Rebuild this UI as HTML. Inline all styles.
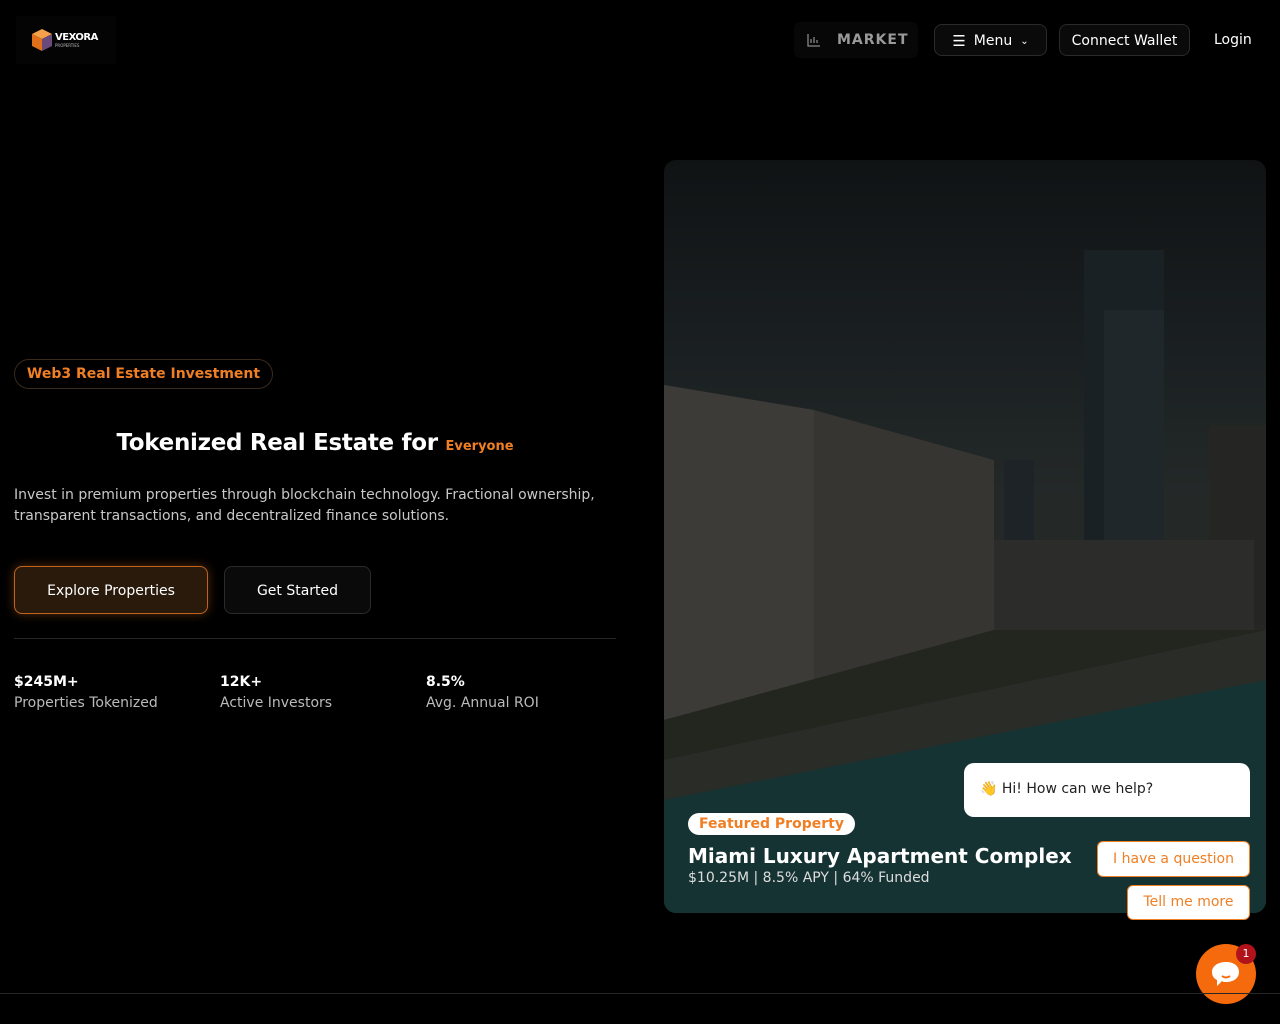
<!DOCTYPE html>
<html><head><meta charset="utf-8"><style>
*{margin:0;padding:0;box-sizing:border-box}
body{width:1280px;height:1024px;background:#000;font-family:"DejaVu Sans",sans-serif;color:#fff;position:relative;overflow:hidden}
.abs{position:absolute}
.btn{position:absolute;border:1px solid #2a2a2a;border-radius:8px;background:#0a0a0a;font-size:14px;display:flex;align-items:center;justify-content:center}
</style></head><body>
<div class="abs" style="left:16px;top:16px;width:100px;height:48px;background:#040404"></div>
<svg class="abs" style="left:32px;top:29px" width="20" height="22" viewBox="0 0 20 22"><polygon points="10,0 20,5 10,10 0,5" fill="#f5a04a"/><polygon points="0,5 10,10 10,22 0,17" fill="#e0701a"/><polygon points="20,5 10,10 10,22 20,17" fill="#6a4a7a"/></svg>
<div class="abs" style="left:55px;top:32px;font-size:10px;font-weight:bold;letter-spacing:-0.5px">VEXORA</div>
<div class="abs" style="left:55px;top:43px;font-size:4px;color:#bbb">PROPERTIES</div>
<div class="abs" style="left:794px;top:22px;width:124px;height:36px;background:#070707;border-radius:6px"></div>
<svg class="abs" style="left:807px;top:33px" width="14" height="14" viewBox="0 0 14 14" stroke="#888" fill="none" stroke-width="1.3"><path d="M1 1v12h12M4 10V6M7 10V4M10 10V7"/></svg>
<div class="abs" style="left:837px;top:32px;font-size:14px;font-weight:bold;color:#9a9a9a;letter-spacing:1px">MARKET</div>
<div class="btn" style="left:934px;top:24px;width:113px;height:32px;gap:8px;padding-top:2px"><span style="font-size:15px">☰</span>Menu<span style="font-size:10px">⌄</span></div>
<div class="btn" style="left:1059px;top:24px;width:131px;height:32px;padding-top:2px">Connect Wallet</div>
<div class="abs" style="left:1214px;top:32px;font-size:14px">Login</div>

<div class="abs" style="left:14px;top:359px;width:259px;height:30px;border:1px solid #3a2a1c;border-radius:15px;color:#f07f24;font-weight:bold;font-size:14px;line-height:29px;text-align:center">Web3 Real Estate Investment</div>
<div class="abs" style="left:0;top:430px;width:630px;text-align:center;font-size:23px;font-weight:bold;letter-spacing:-0.3px">Tokenized Real Estate for <span style="font-size:13px;color:#f07f24;letter-spacing:0">Everyone</span></div>
<div class="abs" style="left:14px;top:485px;width:610px;font-size:14px;line-height:21px;color:#c8c8c8">Invest in premium properties through blockchain technology. Fractional ownership, transparent transactions, and decentralized finance solutions.</div>
<div class="btn" style="left:14px;top:566px;width:194px;height:48px;background:#2a1a0c;border-color:#c0631c;box-shadow:0 0 10px rgba(240,127,36,.35);padding-top:2px">Explore Properties</div>
<div class="btn" style="left:224px;top:566px;width:147px;height:48px;padding-top:2px">Get Started</div>
<div class="abs" style="left:14px;top:638px;width:602px;height:1px;background:#262626"></div>
<div class="abs" style="left:14px;top:672px;font-size:14px;line-height:21px"><b>$245M+</b><br><span style="color:#bbb">Properties Tokenized</span></div>
<div class="abs" style="left:220px;top:672px;font-size:14px;line-height:21px"><b>12K+</b><br><span style="color:#bbb">Active Investors</span></div>
<div class="abs" style="left:426px;top:672px;font-size:14px;line-height:21px"><b>8.5%</b><br><span style="color:#bbb">Avg. Annual ROI</span></div>

<div class="abs" style="left:664px;top:160px;width:602px;height:753px;border-radius:12px;overflow:hidden;background:linear-gradient(#101314 0%,#1a1f21 25%,#242928 45%,#262723 65%,#202419 78%,#163030 88%,#143030 100%)">
<svg width="602" height="753" style="position:absolute;left:0;top:0">
<rect x="420" y="90" width="80" height="340" fill="#1a2124"/>
<rect x="440" y="150" width="60" height="300" fill="#1f272a"/>
<rect x="545" y="265" width="57" height="200" fill="#252524"/>
<rect x="340" y="300" width="30" height="150" fill="#1d2326"/>
<polygon points="0,225 150,250 330,300 330,470 150,520 0,560" fill="#363532"/>
<polygon points="0,225 150,250 150,520 0,560" fill="#3d3b37"/>
<rect x="330" y="380" width="260" height="90" fill="#2c2c2a"/>
<polygon points="0,560 330,470 602,470 602,490 0,620" fill="#22261f"/>
<polygon points="0,600 602,470 602,520 0,640" fill="#2a2c28"/>
<polygon points="0,640 602,520 602,753 0,753" fill="#163334"/>
</svg>
</div>
<div class="abs" style="left:688px;top:813px;width:167px;height:22px;background:#fff;border-radius:11px;color:#f07f24;font-weight:bold;font-size:14px;line-height:22px;text-align:center">Featured Property</div>
<div class="abs" style="left:688px;top:844px;font-size:20px;font-weight:bold">Miami Luxury Apartment Complex</div>
<div class="abs" style="left:688px;top:870px;font-size:14px;color:#ddd">$10.25M | 8.5% APY | 64% Funded</div>

<div class="abs" style="left:964px;top:763px;width:286px;height:54px;background:#fff;border-radius:10px 10px 0 10px;color:#222;font-size:14px;padding:18px 0 0 16px">👋 Hi! How can we help?</div>
<div class="abs" style="left:1097px;top:841px;width:153px;height:36px;background:#fff;border:1px solid #f07f24;border-radius:6px;color:#f07f24;font-size:14px;line-height:34px;text-align:center">I have a question</div>
<div class="abs" style="left:1127px;top:885px;width:123px;height:35px;background:#fff;border:1px solid #f07f24;border-radius:6px;color:#f07f24;font-size:14px;line-height:33px;text-align:center">Tell me more</div>
<div class="abs" style="left:1196px;top:944px;width:60px;height:60px;border-radius:50%;background:#f46a0c"></div>
<svg class="abs" style="left:1208px;top:958px" width="36" height="36" viewBox="0 0 36 36"><path d="M18 4c8 0 13 4 13 10s-5 10-13 10c-2 0-3 0-4-1l-5 5v-6c-4-2-5-5-5-8 0-6 6-10 14-10z" fill="#fff"/><path d="M14 18q4 3 8 0" stroke="#f46a0c" stroke-width="2" fill="none"/></svg>
<div class="abs" style="left:1236px;top:944px;width:20px;height:20px;border-radius:50%;background:#b0141a;font-size:11px;text-align:center;line-height:20px">1</div>
<div class="abs" style="left:0;top:993px;width:1280px;height:1px;background:#262626"></div>
</body></html>
